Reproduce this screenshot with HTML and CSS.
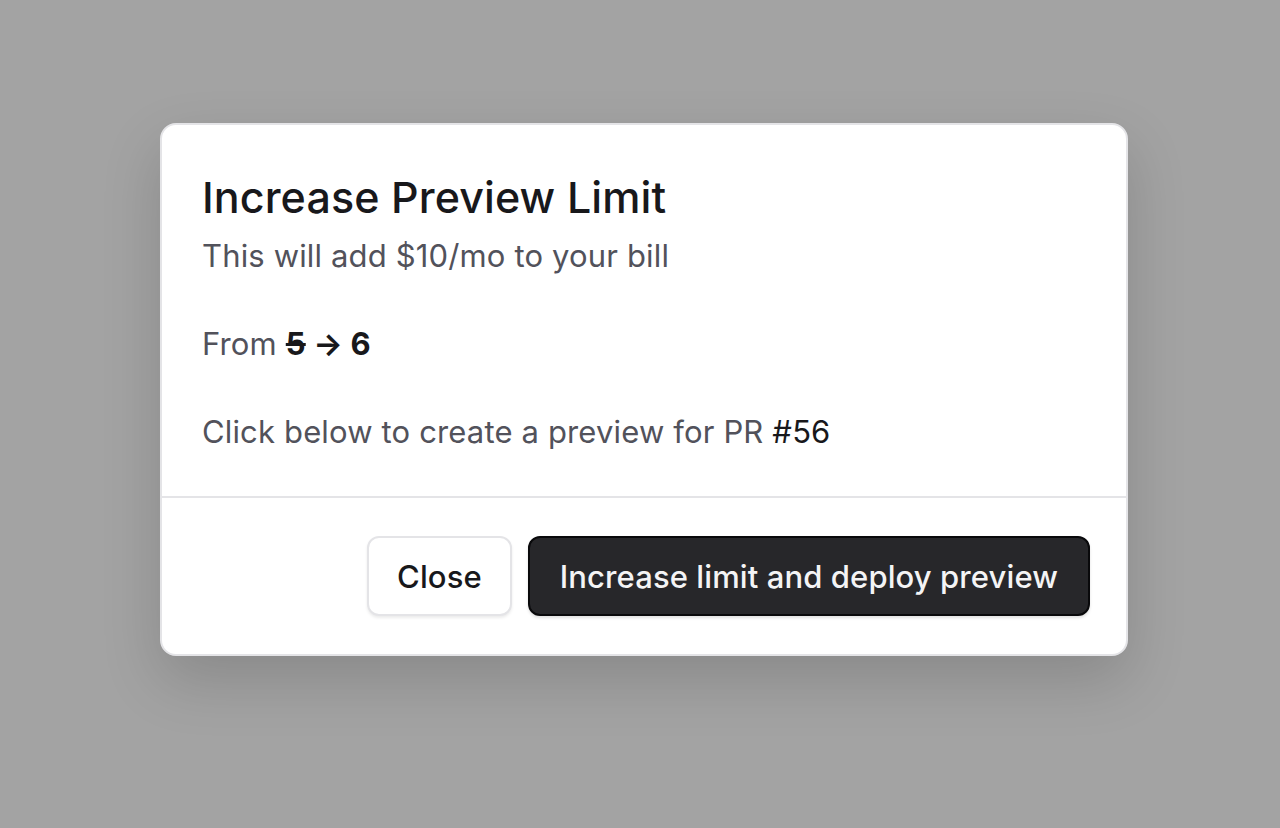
FILE: index.html
```html
<!DOCTYPE html>
<html lang="en">
<head>
    <meta charset="UTF-8">
    <meta name="viewport" content="width=device-width, initial-scale=1.0">
    <title>Increase Preview Limit</title>
    <link rel="stylesheet" href="styles.css">
</head>
<body>
    <div class="overlay">
        <div class="modal">
            <div class="modal-body">
                <h2 class="modal-title">Increase Preview Limit</h2>
                <p class="modal-subtitle">This will add $10/mo to your bill</p>
                <p class="modal-text">From <strong><s>5</s> &rarr; 6</strong></p>
                <p class="modal-text">Click below to create a preview for PR <span class="pr">#56</span></p>
            </div>
            <div class="modal-footer">
                <button class="btn btn-secondary">Close</button>
                <button class="btn btn-primary">Increase limit and deploy preview</button>
            </div>
        </div>
    </div>
</body>
</html>
```

FILE: styles.css
```css
body {
    margin: 0;
    padding: 0;
    font-family: Inter, "Noto Sans", sans-serif;
    background-color: #a3a3a3;
}
.overlay {
    height: 828px;
    display: flex;
    justify-content: center;
    padding: 123px 0 0 8px;
    box-sizing: border-box;
}
.modal {
    width: 968px;
    height: 533px;
    box-sizing: border-box;
    background: #fff;
    border: 2px solid #e4e4e7;
    border-radius: 16px;
    box-shadow: 0 24px 60px rgba(0,0,0,0.16);
    display: flex;
    flex-direction: column;
}
.modal-body {
    padding: 47px 40px 0 40px;
    height: 373px;
    box-sizing: border-box;
    border-bottom: 2px solid #e4e4e7;
}
.modal-title {
    margin: 0;
    font-size: 43px;
    font-weight: 500;
    color: #18181b;
    line-height: 50px;
    letter-spacing: 0.1px;
}
.modal-subtitle {
    margin: 14px 0 0 0;
    font-size: 31px;
    color: #52525b;
    line-height: 40px;
    letter-spacing: 0.15px;
}
.modal-text {
    margin: 48px 0 0 0;
    font-size: 31px;
    color: #52525b;
    line-height: 40px;
    letter-spacing: 0.15px;
}
.modal-text strong {
    color: #18181b;
    font-weight: 700;
}
.pr {
    color: #18181b;
}
.modal-footer {
    flex: 1;
    display: flex;
    justify-content: flex-end;
    align-items: center;
    gap: 16px;
    padding: 0 36px;
}
.btn {
    font-family: Inter, "Noto Sans", sans-serif;
    font-size: 31px;
    font-weight: 500;
    height: 80px;
    border-radius: 12px;
    padding: 0 30px;
    letter-spacing: 0.1px;
    cursor: pointer;
}
.btn-secondary {
    padding: 0 28px;
    background: #fff;
    color: #18181b;
    border: 2px solid #e4e4e7;
    box-shadow: 0 2px 3px rgba(0,0,0,0.08);
}
.btn-primary {
    background: #27272a;
    color: #f4f4f5;
    border: 2px solid #09090b;
    box-shadow: 0 2px 3px rgba(0,0,0,0.12);
}
```
